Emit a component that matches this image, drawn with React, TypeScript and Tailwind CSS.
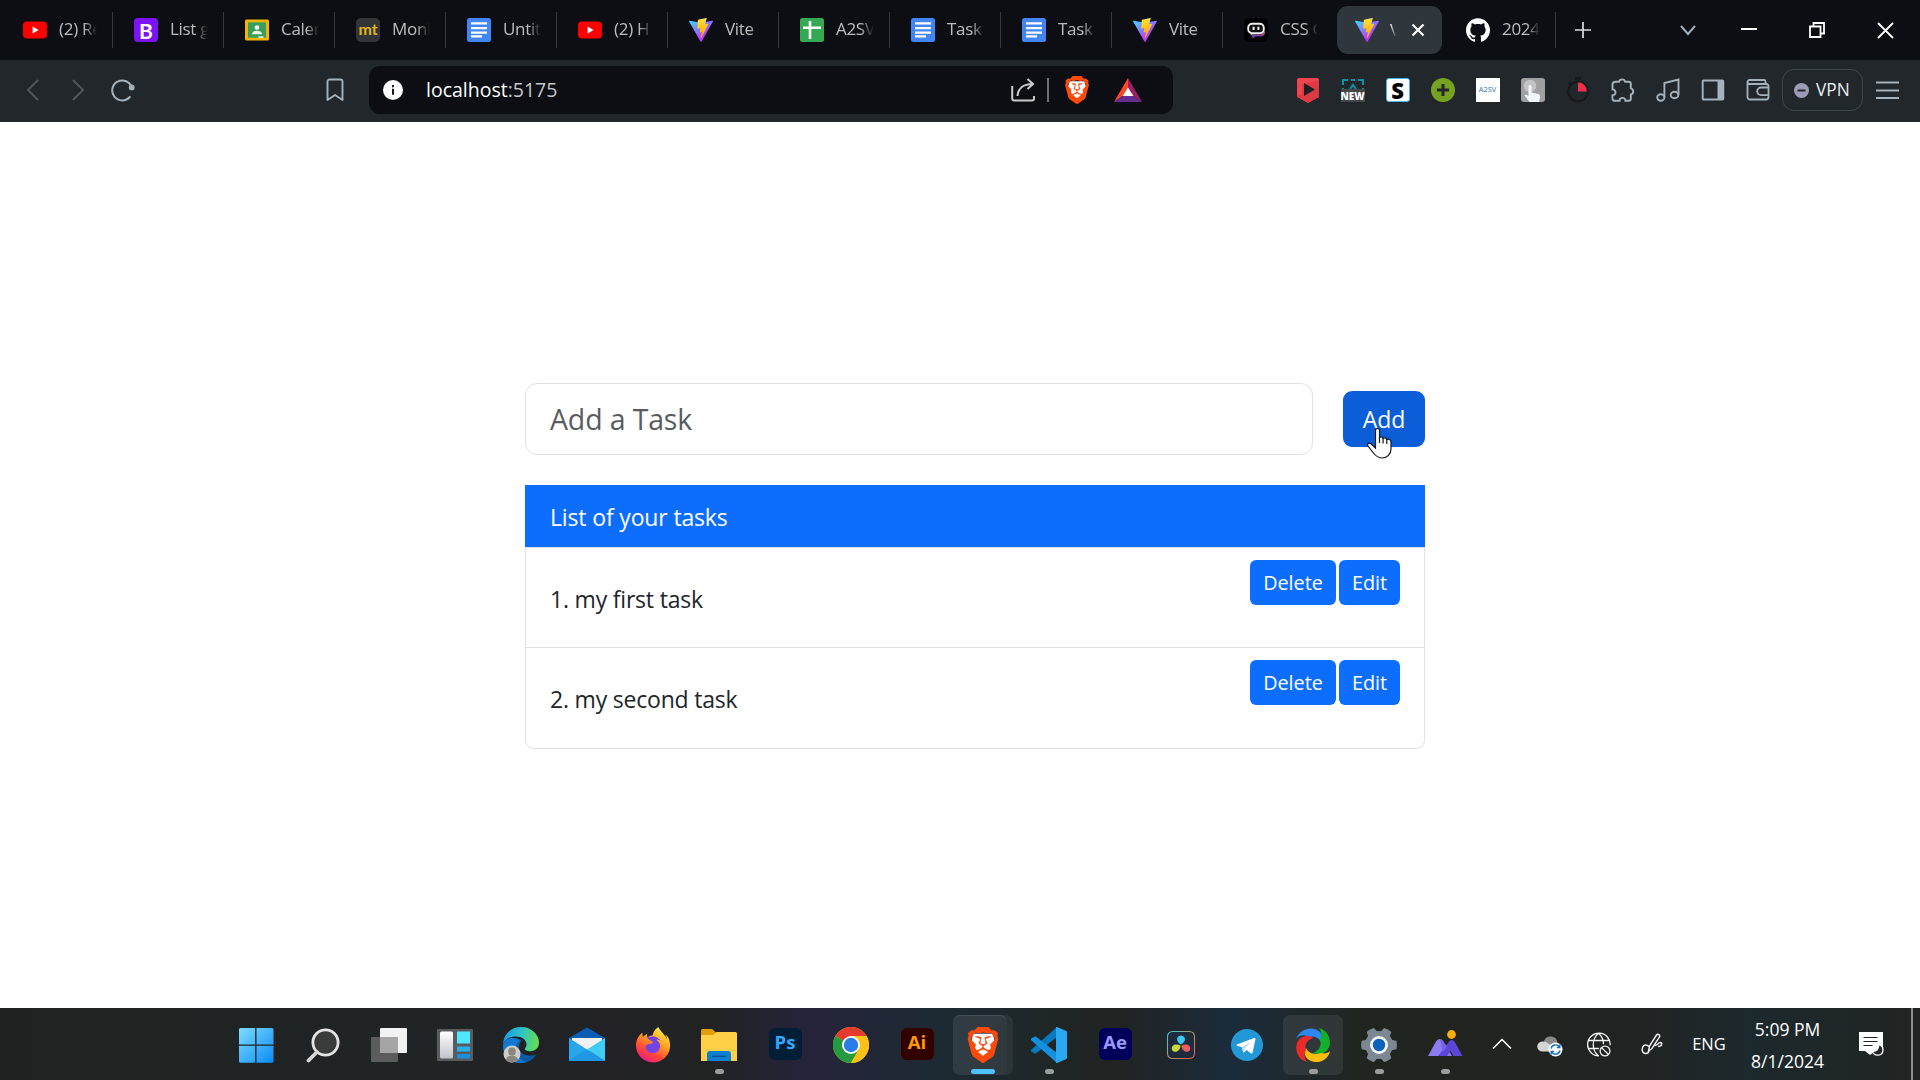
import React from "react";
import { SiBrave, SiGithub } from "react-icons/si";
import { FaFirefoxBrowser } from "react-icons/fa";

const Youtube = () => (
  <svg width="24" height="24" viewBox="0 0 24 24">
    <rect x="0" y="3.6" width="24" height="17" rx="4" fill="#f00" />
    <path d="M9.6 8.6v7l6-3.5z" fill="#fff" />
  </svg>
);

const Bootstrap = () => (
  <div className="flex h-6 w-6 items-center justify-center rounded-[4px] bg-[#7b12f7] font-['Lato'] text-[21px] leading-none font-bold text-white">
    B
  </div>
);

const Classroom = () => (
  <svg width="24" height="24" viewBox="0 0 24 24">
    <rect x="0" y="1.5" width="24" height="21" rx="1.5" fill="#f4b400" />
    <rect x="3" y="4.3" width="18" height="15.4" fill="#3a9e5a" />
    <circle cx="12" cy="9.5" r="2.3" fill="#fff" />
    <path d="M7 16.2c0-2.6 2.600-3.500 5-3.500s5 .9 5 3.500z" fill="#e8f5e9" />
    <rect x="13.500" y="18.300" width="5" height="1.600" fill="#e8f5e9" />
  </svg>
);

const Monkeytype = () => (
  <div className="flex h-6 w-6 items-center justify-center rounded-[5px] bg-[#323437] pb-[2px] font-['Lato'] text-[16px] leading-none font-bold text-[#e2b714]">
    mt
  </div>
);

const Docs = () => (
  <svg width="24" height="24" viewBox="0 0 24 24">
    <rect width="24" height="24" rx="2.500" fill="#4285f4" />
    <path d="M4 5.400h16M4 10.200h16M4 14.600h16M4 18.300h11" stroke="#fff" strokeWidth="2.200" />
  </svg>
);

const Sheets = () => (
  <svg width="24" height="24" viewBox="0 0 24 24">
    <rect width="24" height="24" rx="2.500" fill="#34a853" />
    <path d="M10 3v18M3 9.700h18" stroke="#fff" strokeWidth="2.600" />
  </svg>
);

const Vite = ({ id }: { id: string }) => (
  <svg width="24" height="24" viewBox="0 0 256 257" className="shrink-0">
    <defs>
      <linearGradient id={id + "a"} x1="0" y1="10%" x2="58%" y2="80%">
        <stop offset="0" stopColor="#41d1ff" />
        <stop offset="1" stopColor="#bd34fe" />
      </linearGradient>
      <linearGradient id={id + "b"} x1="43%" y1="2%" x2="50%" y2="89%">
        <stop offset="0" stopColor="#ffea83" />
        <stop offset=".1" stopColor="#ffdd35" />
        <stop offset="1" stopColor="#ffa800" />
      </linearGradient>
    </defs>
    <path
      fill={"url(#" + id + "a)"}
      d="M255.153 37.938L134.897 252.976c-2.483 4.440-8.862 4.466-11.382.048L.875 37.958c-2.746-4.814 1.371-10.646 6.827-9.670l120.385 21.517a6.537 6.537 0 0 0 2.322-.004l117.867-21.483c5.438-.991 9.574 4.796 6.877 9.620Z"
    />
    <path
      fill={"url(#" + id + "b)"}
      d="M185.432.063L96.440 17.501a3.268 3.268 0 0 0-2.634 3.014l-5.474 92.456a3.268 3.268 0 0 0 3.997 3.378l24.777-5.718c2.318-.535 4.413 1.507 3.936 3.838l-7.361 36.047c-.495 2.426 1.782 4.500 4.151 3.780l15.304-4.649c2.372-.720 4.652 1.360 4.150 3.788l-11.698 56.621c-.732 3.542 3.979 5.473 5.943 2.437l1.313-2.028l72.516-144.720c1.215-2.423-.880-5.186-3.540-4.672l-25.505 4.922c-2.396.462-4.435-1.770-3.759-4.114l16.646-57.705c.677-2.350-1.370-4.583-3.769-4.113Z"
    />
  </svg>
);

const ChatBot = () => (
  <svg width="24" height="24" viewBox="0 0 24 24">
    <rect width="24" height="24" rx="5.500" fill="#000" />
    <path d="M8 16.500h9l3.500-3.500v3l-3 2.500h-6l-3 2.200z" fill="#7a3fa8" />
    <path d="M17.500 17l3.500-4v2.500l-2.500 3z" fill="#c2477f" />
    <rect x="4.200" y="5.800" width="15.600" height="9.400" rx="4" fill="#111" stroke="#eee" strokeWidth="1.900" />
    <path d="M6.800 15v2.400l3-2.300" fill="#eee" />
    <path d="M9.600 8.700v3.400M14.400 8.700v3.400" stroke="#eee" strokeWidth="2.100" />
  </svg>
);

const tabs = [
  { icon: <Youtube />, label: "(2) Re" },
  { icon: <Bootstrap />, label: "List gr" },
  { icon: <Classroom />, label: "Calen" },
  { icon: <Monkeytype />, label: "Monk" },
  { icon: <Docs />, label: "Untitl" },
  { icon: <Youtube />, label: "(2) H" },
  { icon: <Vite id="v1" />, label: "Vite" },
  { icon: <Sheets />, label: "A2SV" },
  { icon: <Docs />, label: "Task" },
  { icon: <Docs />, label: "Task" },
  { icon: <Vite id="v2" />, label: "Vite" },
  { icon: <ChatBot />, label: "CSS G" },
  { icon: <Vite id="v3" />, label: "V", active: true },
  { icon: <SiGithub size={24} color="#fff" />, label: "2024-" },
];

const TabBar = () => (
  <div className="flex h-[60px] w-full items-start bg-[#0d0e13] pl-[3px]">
    {tabs.map((t, i) =>
      t.active ? (
        <div key={i} className="flex h-[60px] w-[111px] shrink-0 items-center">
          <div className="ml-[2px] flex h-[48px] w-[105px] items-center rounded-[11px] bg-[#2f373c] pl-[18px]">
            {t.icon}
            <span className="ml-[11px] w-[6px] overflow-hidden text-[17px] text-[#dfe1e5] [mask-image:linear-gradient(to_right,black_20%,transparent)]">
              {t.label}
            </span>
            <svg className="ml-[15px]" width="14" height="14" viewBox="0 0 14 14">
              <path d="M1.500 1.500l11 11M12.500 1.500l-11 11" stroke="#fff" strokeWidth="2.200" />
            </svg>
          </div>
        </div>
      ) : (
        <div key={i} className="flex h-[60px] w-[111px] shrink-0 items-center pl-5">
          {t.icon}
          <span className="ml-3 w-[38px] overflow-hidden pb-[2px] text-[17px] leading-6 tracking-[-0.3px] whitespace-nowrap text-[#bcbdbf] [mask-image:linear-gradient(to_right,black_65%,transparent)]">
            {t.label}
          </span>
          {i !== 11 && <span className="ml-[15px] h-[36px] w-px bg-[#37383c]" />}
        </div>
      )
    )}
    <div className="flex h-[60px] grow items-center">
      <svg className="ml-[17px]" width="18" height="18" viewBox="0 0 18 18">
        <path d="M9 1v16M1 9h16" stroke="#dadde0" strokeWidth="1.700" />
      </svg>
      <svg className="ml-[88px]" width="16" height="12" viewBox="0 0 16 12">
        <path d="M1 2l7 8 7-8" fill="none" stroke="#a0b0ba" strokeWidth="2" />
      </svg>
      <svg className="ml-[45px]" width="16" height="16" viewBox="0 0 16 16">
        <path d="M0 7h16" stroke="#fff" strokeWidth="2" />
      </svg>
      <svg className="ml-[52px]" width="16" height="16" viewBox="0 0 16 16">
        <path d="M1 4.500h10.500V15H1zM4.500 4V1H15v10.500h-3" fill="none" stroke="#fff" strokeWidth="1.800" />
      </svg>
      <svg className="ml-[52px]" width="17" height="17" viewBox="0 0 17 17">
        <path d="M1 1l15 15M16 1L1 16" stroke="#fff" strokeWidth="1.800" />
      </svg>
    </div>
  </div>
);

const BraveLion = ({ size }: { size: number }) => (
  <svg width={size} height={size} viewBox="0 0 24 24">
    <path d="M5.500 4.500h13l1.500 6-3 8-5 3.500-5-3.500-3-8z" fill="#fff" />
    <SiBrave size={24} color="#fb4a0b" />
  </svg>
);

const Slot = ({ children }: { children: React.ReactNode }) => (
  <div className="flex w-[45px] shrink-0 items-center justify-center">{children}</div>
);

const Toolbar = () => (
  <div className="flex h-[62px] w-full items-center bg-[#22272b] pb-[2px] pl-[10px]">
    <Slot>
      <svg width="14" height="24" viewBox="0 0 14 24">
        <path d="M12 2L2 12l10 10" fill="none" stroke="#4d575d" strokeWidth="2" />
      </svg>
    </Slot>
    <Slot>
      <svg width="14" height="24" viewBox="0 0 14 24">
        <path d="M2 2l10 10L2 22" fill="none" stroke="#4d575d" strokeWidth="2" />
      </svg>
    </Slot>
    <Slot>
      <svg width="24" height="24" viewBox="0 0 24 24">
        <path d="M20.800 9.500A10 10 0 1 0 18.800 19" fill="none" stroke="#a3b2bc" strokeWidth="2" strokeLinecap="round" />
        <circle cx="20.700" cy="9.400" r="2.900" fill="#a3b2bc" />
      </svg>
    </Slot>
    <div className="w-[167px]" />
    <Slot>
      <svg width="18" height="24" viewBox="0 0 18 24">
        <path d="M3.500 1.500h11a2 2 0 0 1 2 2v18.500L9 17l-7.500 5V3.500a2 2 0 0 1 2-2z" fill="none" stroke="#a3b2bc" strokeWidth="1.900" strokeLinejoin="round" />
      </svg>
    </Slot>
    <div className="ml-3 flex h-[48px] w-[804px] shrink-0 items-center rounded-[11px] bg-[#0d0e13] pl-[14px]">
      <svg width="20" height="20" viewBox="0 0 20 20">
        <circle cx="10" cy="10" r="10" fill="#fff" />
        <path d="M10 5v2.200M10 8.800v6" stroke="#17181c" strokeWidth="2" />
      </svg>
      <span className="ml-[23px] w-[585px] text-[19.500px] text-white">
        localhost<span className="text-[#c3c5c8]">:5175</span>
      </span>
      <svg width="24" height="24" viewBox="0 0 24 24">
        <path d="M1.200 8v12.500a2 2 0 0 0 2 2H21a2 2 0 0 0 2-2V18M6.500 18C7 11 12 6 21.500 6M16.500 1l5.500 5-5.500 5" fill="none" stroke="#c8cacc" strokeWidth="2" />
      </svg>
      <span className="ml-[12px] h-6 w-[2px] bg-[#6c6e72]" />
      <span className="ml-[14px]">
        <BraveLion size={28} />
      </span>
      <svg className="ml-[23px]" width="28" height="24" viewBox="0 0 28 24">
        <path d="M14 0v9.500L8.500 18 0 24z" fill="#ff4724" />
        <path d="M14 0l14 24-8.500-6L14 9.500z" fill="#9e1f63" />
        <path d="M0 24l8.500-6h11l8.500 6z" fill="#662d91" />
        <path d="M14 9.500l5.500 8.500h-11z" fill="#fff" />
      </svg>
    </div>
    <div className="w-[112px] shrink-0" />
    <Slot>
      <svg width="24" height="26" viewBox="0 0 24 26">
        <path d="M3 1h18a2 2 0 0 1 2 2v17l-11 6L1 20V3a2 2 0 0 1 2-2z" fill="#ee4450" />
        <path d="M1 19l5-2V7l17-4v17l-11 6z" fill="#d9363f" opacity=".7" />
        <path d="M8 6v13l11-6.500z" fill="#1d2023" />
      </svg>
    </Slot>
    <Slot>
      <div className="flex h-6 w-6 flex-col items-center">
        <svg className="shrink-0" width="22" height="11" viewBox="0 0 22 11">
          <path d="M1 7V2h5M16 2h5v5M9 2h4M8 11l3-4 3 4M1 10v1M21 10v1" fill="none" stroke="#0993a8" strokeWidth="2" />
        </svg>
        <div className="flex h-[13px] w-6 items-center justify-center bg-[#444749] text-[10px] leading-none font-extrabold text-white">
          NEW
        </div>
      </div>
    </Slot>
    <Slot>
      <div className="flex h-6 w-6 items-center justify-center rounded-[3px] border border-[#41b8ea] bg-white text-[22px] leading-none font-extrabold text-black">
        S
      </div>
    </Slot>
    <Slot>
      <svg width="24" height="24" viewBox="0 0 24 24">
        <circle cx="12" cy="12" r="12" fill="#77a120" />
        <path d="M12 6v12M6 12h12" stroke="#22272b" strokeWidth="3" />
      </svg>
    </Slot>
    <Slot>
      <div className="flex h-6 w-6 items-center justify-center bg-white text-[7.500px] leading-none text-[#3178b4]">A2SV</div>
    </Slot>
    <Slot>
      <svg width="24" height="24" viewBox="0 0 24 24">
        <rect width="24" height="24" rx="3" fill="#a0a0a0" />
        <circle cx="9" cy="8" r="6.200" fill="#c4c4c4" />
        <path d="M7.500 8.500c0-2 3-2 3 0v6l6 1.200c2 .4 2.800 1.500 2.500 3.300L18.200 24H8.500L3.500 17.500c1.200-1.300 2.800-.5 4 .8z" fill="#f1f6fd" />
      </svg>
    </Slot>
    <Slot>
      <svg width="24" height="26" viewBox="0 0 24 26">
        <circle cx="12" cy="14.500" r="9.800" fill="none" stroke="#17191b" strokeWidth="2" />
        <path d="M9 1.500h6M12 2v3M3 5.500l2 2" stroke="#17191b" strokeWidth="2.500" />
        <path d="M12 14.500V5.300a9 9 0 0 1 8.800 9.200z" fill="#f2304a" />
      </svg>
    </Slot>
    <Slot>
      <svg width="24" height="24" viewBox="0 0 24 24">
        <path
          d="M4.500 3.800H8a3.200 3.200 0 0 1 6.200 0h3.600a2 2 0 0 1 2 2v4.500a3.200 3.200 0 0 1 0 6.200v4.300a2 2 0 0 1-2 2h-3.400c.3-3.800-6-4-5.800 0H3.500a2 2 0 0 1-2-2v-3.600c4 .3 4-6 0-5.800V6.800a3 3 0 0 1 3-3z"
          fill="none"
          stroke="#a3b2bc"
          strokeWidth="1.900"
        />
      </svg>
    </Slot>
    <Slot>
      <svg width="24" height="24" viewBox="0 0 24 24" fill="none" stroke="#a3b2bc" strokeWidth="1.900">
        <ellipse cx="4.800" cy="19.500" rx="3.600" ry="3.200" />
        <ellipse cx="18.500" cy="17" rx="3.800" ry="3.200" />
        <path d="M8.400 19.500V5L22.500 1.500V17" />
      </svg>
    </Slot>
    <Slot>
      <svg width="24" height="24" viewBox="0 0 24 24">
        <rect x="1.700" y="2.500" width="20.600" height="19" rx="1" fill="none" stroke="#a3b2bc" strokeWidth="1.900" />
        <path d="M16.500 2.500h6v19h-6z" fill="#a3b2bc" />
      </svg>
    </Slot>
    <Slot>
      <svg width="24" height="24" viewBox="0 0 24 24" fill="none" stroke="#a3b2bc" strokeWidth="1.800">
        <path d="M1.500 4v15a2.500 2.500 0 0 0 2.500 2.500h16a2.500 2.500 0 0 0 2.500-2.500V8a2 2 0 0 0-2-2H3.500a2 2 0 0 1 0-4H18a1.500 1.500 0 0 1 1.500 1.500V6" />
        <path d="M22.500 9.500H15a3.800 3.800 0 0 0 0 7.600h7.500" />
      </svg>
    </Slot>
    <div className="ml-[2px] flex h-[42px] w-[81px] shrink-0 items-center rounded-[12px] border border-[#3d494d] pl-[11px]">
      <svg width="15" height="15" viewBox="0 0 15 15">
        <circle cx="7.500" cy="7.500" r="7.500" fill="#9c9cb4" />
        <path d="M3.500 7.500h8" stroke="#22272b" strokeWidth="2" />
      </svg>
      <span className="ml-[7px] pb-px text-[17.300px] leading-none text-[#eceef0]">VPN</span>
    </div>
    <svg className="ml-[13px] shrink-0" width="23" height="18" viewBox="0 0 23 18">
      <path d="M0 1.500h23M0 9.500h23M0 17h23" stroke="#a3b2bc" strokeWidth="1.900" />
    </svg>
  </div>
);

const HandCursor = () => (
  <svg className="absolute top-[36px] left-[23px]" width="27" height="33" viewBox="0 0 27 33">
    <path
      d="M9.500 21V3.500c0-2.700 4-2.700 4 0V10.500c1-1.200 3.300-.8 3.600.8 1.300-1 3.500-.4 3.700 1.200 1.500-.8 4.200-.2 4.200 2.500v7c0 5-4 9-8.500 9-4 0-7-2.200-9.500-5.500L1.800 18.800c-1-2.500 1.500-3.500 3.700-1.600z"
      fill="#fff"
      stroke="#151520"
      strokeWidth="1.200"
    />
    <path d="M13.500 10v6M17.100 11v5.500M20.800 12.500v4.500" stroke="#151520" strokeWidth="1.200" />
  </svg>
);

const TaskRow = ({ n, text, last }: { n: number; text: string; last?: boolean }) => (
  <li
    className={
      last
        ? "flex h-[102px] items-start justify-between rounded-b-[9px] border border-[#dee2e6] pt-[12px] pr-[24px] pl-[24px]"
        : "flex h-[100px] items-start justify-between border-x border-t border-[#dee2e6] pt-[12px] pr-[24px] pl-[24px]"
    }
  >
    <span className="mt-[21px] text-[23px] leading-[36px] tracking-[-0.2px] text-[#212529]">
      {n}. {text}
    </span>
    <div className="flex gap-[3px]">
      <button className="h-[45px] w-[86px] rounded-[6px] bg-[#0d6efd] pt-px text-[19.800px] text-white">Delete</button>
      <button className="h-[45px] w-[61px] rounded-[6px] bg-[#0d6efd] pt-px text-[19.800px] text-white">Edit</button>
    </div>
  </li>
);

const Page = () => (
  <main className="flex h-[886px] w-full flex-col items-center bg-white pt-[261px] pl-[30px]">
    <div className="w-[900px]">
      <div className="flex h-[72px] items-center justify-between">
        <div className="flex h-[72px] w-[788px] items-center rounded-[12px] border border-[#dee2e6] pl-[24px] text-[28.500px] leading-none tracking-[-0.150px] text-[#595c5f]">
          Add a Task
        </div>
        <div className="relative h-[56px] w-[82px]">
          <button className="h-[56px] w-[82px] rounded-[9px] bg-[#0b5ed7] pt-px text-[23px] text-white">Add</button>
          <HandCursor />
        </div>
      </div>
      <ul className="mt-[30px]">
        <li className="flex h-[62px] items-center bg-[#0d6efd] pt-[3px] pl-[25px] text-[23px] tracking-[-0.150px] text-white">
          List of your tasks
        </li>
        <TaskRow n={1} text="my first task" />
        <TaskRow n={2} text="my second task" last />
      </ul>
    </div>
  </main>
);

const Windows = () => (
  <svg width="36" height="36" viewBox="0 0 36 36">
    <defs>
      <linearGradient id="win" x1="0" y1="0" x2="1" y2="1">
        <stop offset="0" stopColor="#7fdcff" />
        <stop offset="1" stopColor="#0a8bf7" />
      </linearGradient>
    </defs>
    <path d="M1.500 1H16.200v16.500H0V2.500A1.500 1.500 0 0 1 1.500 1zM17.500 1h15.500a1.500 1.500 0 0 1 1.500 1.500v15H17.500zM0 18.800h16.200V35.800H1.500a1.500 1.500 0 0 1-1.500-1.500zM17.500 18.800h17v15.500a1.500 1.500 0 0 1-1.500 1.500H17.500z" fill="url(#win)" />
  </svg>
);

const SearchIcon = () => (
  <svg width="36" height="36" viewBox="0 0 36 36">
    <circle cx="20.500" cy="15.500" r="12.600" fill="#3a3b3b" stroke="#e4e4e4" strokeWidth="2.800" />
    <path d="M12 25l-8.500 8.500" stroke="#d6d6d6" strokeWidth="3.800" strokeLinecap="round" />
  </svg>
);

const TaskView = () => (
  <svg width="36" height="36" viewBox="0 0 36 36">
    <rect x="9" y="1" width="27" height="25" rx="1" fill="#f2f2f2" />
    <rect x="0" y="10" width="27" height="25" rx="1" fill="#5c5c5c" />
    <path d="M9 10h18v16H9z" fill="#a5a5a5" />
  </svg>
);

const Widgets = () => (
  <svg width="36" height="36" viewBox="0 0 36 36">
    <defs>
      <linearGradient id="wid" x1="0" y1="0" x2="0" y2="1">
        <stop offset="0" stopColor="#fff" />
        <stop offset="1" stopColor="#bfc3c9" />
      </linearGradient>
    </defs>
    <rect x="0" y="2" width="36" height="32" rx="1" fill="#595b5d" />
    <rect x="3" y="4.500" width="13" height="27" rx="1.500" fill="url(#wid)" />
    <rect x="20" y="4.500" width="13" height="12" fill="#50e6ff" />
    <rect x="20" y="19.500" width="13" height="5" fill="#28afea" />
    <rect x="20" y="27" width="13" height="4.500" fill="#1a90dc" />
  </svg>
);

const Edge = () => (
  <svg width="36" height="36" viewBox="0 0 36 36">
    <defs>
      <linearGradient id="edgeTop" x1="0" y1=".4" x2="1" y2=".5">
        <stop offset="0" stopColor="#1c9ce0" />
        <stop offset=".5" stopColor="#2cc3c9" />
        <stop offset="1" stopColor="#67e04b" />
      </linearGradient>
    </defs>
    <path d="M0 18C0 30 8 36 18 36c7 0 12-3 15-8.500-6 2.500-17 1-17-8 0-2.500 1-4.500 2.500-6C12 9 2 10 0 18z" fill="#0c59a4" />
    <path d="M0 18c2-8 12-9 17-4-4 2-5.500 9-2.500 14 2 3.500 5 6 8.500 7.300C10 38 0 31 0 18z" fill="#1279d1" />
    <path d="M0 17C1 6 9 0 18 0c11 0 18 8 18 15.500 0 6-4.500 8.700-9 8.700-3.500 0-5.500-1-5-2.700.5-1.300 1.500-2 1.500-4C23.500 13 19 9.500 13 9.500 7 9.500 2 12 0 17z" fill="url(#edgeTop)" />
    <circle cx="9" cy="27" r="8.500" fill="#cfccc8" />
    <circle cx="9" cy="24.500" r="3.900" fill="#8a8783" />
    <path d="M3 33c.5-6 11.500-6 12 0-3 3.300-9 3.300-12 0z" fill="#8a8783" />
  </svg>
);

const Mail = () => (
  <svg width="36" height="36" viewBox="0 0 36 36">
    <path d="M0 11L18 .5 36 11v4H0z" fill="#0a5db3" />
    <path d="M3 11h30v8L18 25 3 19z" fill="#f1f1f1" />
    <path d="M0 11l18 11.500L36 34H1.500A1.500 1.500 0 0 1 0 32.500z" fill="#27a7ea" />
    <path d="M36 11v23L18 22.500z" fill="#3fcdf5" />
    <path d="M0 33L18 22.500 36 34H1z" fill="#1f97e3" />
  </svg>
);

const Firefox = () => (
  <svg width="36" height="36" viewBox="0 0 36 36">
    <defs>
      <linearGradient id="ffx" x1=".8" y1="0" x2=".25" y2="1">
        <stop offset="0" stopColor="#fff44f" />
        <stop offset=".4" stopColor="#ffa21f" />
        <stop offset=".7" stopColor="#ff4a37" />
        <stop offset="1" stopColor="#e7158d" />
      </linearGradient>
    </defs>
    <circle cx="18" cy="18" r="10" fill="#7542e5" />
    <FaFirefoxBrowser size={36} fill="url(#ffx)" />
  </svg>
);

const Folder = () => (
  <svg width="36" height="36" viewBox="0 0 36 36">
    <path d="M0 3.500A1.500 1.500 0 0 1 1.500 2H11l4.500 4v4H0z" fill="#e09f0a" />
    <path d="M0 8h12l3.500-3H34.500A1.500 1.500 0 0 1 36 6.500V34H0z" fill="#ffcf48" />
    <path d="M6 34v-7a3 3 0 0 1 3-3h18a3 3 0 0 1 3 3v7z" fill="#0f80d0" />
    <path d="M11 29.300h14" stroke="#0a4d8a" strokeWidth="1.300" />
  </svg>
);

const Chrome = () => (
  <svg width="36" height="36" viewBox="0 0 36 36">
    <circle cx="18" cy="18" r="18" fill="#fbc116" />
    <path d="M18 18L2.400 9A18 18 0 0 1 33.600 9z" fill="#e33b2e" />
    <path d="M2.400 9A18 18 0 0 0 18 36l7.800-13.500L18 18z" fill="#249a41" />
    <path d="M18 9h15.600A18 18 0 0 1 18 36l7.800-13.500z" fill="#fbc116" />
    <circle cx="18" cy="18" r="9" fill="#fff" />
    <circle cx="18" cy="18" r="7.200" fill="#2a7bea" />
  </svg>
);

const VSCode = () => (
  <svg width="36" height="36" viewBox="0 0 36 36">
    <path d="M26 0v10L4.500 26.800 0.500 24.800c-.7-.6-.7-1.600 0-2.200z" fill="#0879bf" />
    <path d="M26 36V26L4.500 9.200.5 11.200c-.7.600-.7 1.600 0 2.200z" fill="#1590dc" />
    <path d="M26 0l8.800 3.800c.7.300 1.200 1 1.200 1.800v24.800c0 .8-.5 1.500-1.200 1.800L26 36c-.8.200-1-.2-1-1V1c0-.8.200-1.200 1-1z" fill="#29a9f2" />
  </svg>
);

const Adobe = ({ text, cls }: { text: string; cls: string }) => (
  <div className={"mb-[3px] flex h-[32px] w-[33px] items-center justify-center rounded-[6px] pb-[2px] text-[18.500px] leading-none font-bold " + cls}>
    {text}
  </div>
);

const DaVinci = () => (
  <svg width="30" height="30" viewBox="0 0 30 30">
    <defs>
      <linearGradient id="dvb" x1="0" y1="0" x2="1" y2="1">
        <stop offset="0" stopColor="#3ec6d8" />
        <stop offset=".5" stopColor="#b8925a" />
        <stop offset="1" stopColor="#e05a5a" />
      </linearGradient>
    </defs>
    <rect x="1.500" y="1.500" width="27" height="27" rx="5" fill="#1e2b3d" stroke="url(#dvb)" strokeWidth="1.100" />
    <path d="M15 14.500c-5-2.500-5.500-8.500 0-9 5.500.5 5 6.500 0 9z" fill="#3cc8ee" />
    <path d="M14.500 15.500c0 5.500-5.500 8.500-8.500 4.500-1.500-5 4-7 8.500-4.500z" fill="#c7d936" />
    <path d="M15.500 15.500c0 5.500 5.500 8.500 8.500 4.500 1.500-5-4-7-8.500-4.500z" fill="#ee5b61" />
  </svg>
);

const Telegram = () => (
  <svg width="32" height="32" viewBox="0 0 32 32">
    <circle cx="16" cy="16" r="16" fill="#2299d6" />
    <path d="M6 15.500L23 9c1-.4 1.700.2 1.400 1.500l-2.800 13c-.2 1-.9 1.200-1.800.7l-4.300-3.200-2.200 2.200c-.5.500-1.200.4-1.300-.4l-1.200-4.500-4.600-1.500c-.9-.4-.9-.9-.2-1.300z" fill="#fff" />
    <path d="M11 18.500l9.500-6.500-7 7.500-.3 3.500z" fill="#b5d7ea" />
  </svg>
);

const Swirl = () => (
  <svg width="34" height="34" viewBox="0 0 34 34">
    <path d="M0 11C4 1 16-3 24 4c4 4 4 8 2 12-2-6-8-9-13-7-5-3-10-2-13 2z" fill="#2f86ec" />
    <path d="M23 0c11 3 13 15 9 21-3 5-9 6-15 4 6-2 9-7 7-13 2-4 2-8-1-12z" fill="#12b02b" />
    <path d="M34 23c-2 10-13 14-21 9-5-3-5-8-3-12 3 6 9 7 15 5 4 1 7 0 9-2z" fill="#fcbf09" />
    <path d="M11 34C1 32-2 20 2 13c4-6 10-6 16-3-6 1-10 6-8 12-2 4-2 8 1 12z" fill="#ec2a2a" />
  </svg>
);

const Gear = () => (
  <svg width="36" height="36" viewBox="0 0 36 36">
    <g fill="#7c8792">
      <circle cx="18" cy="18" r="14" />
      {[30, 90, 150, 210, 270, 330].map((a) => (
        <path key={a} d="M12.500 7l1.300-6.300c2.700-.8 5.700-.8 8.400 0L23.500 7z" transform={"rotate(" + a + " 18 18)"} />
      ))}
    </g>
    <circle cx="18" cy="18" r="9" fill="#f3f3f3" />
    <circle cx="18" cy="18" r="6.200" fill="#0c63b8" />
  </svg>
);

const Peaks = () => (
  <svg width="36" height="36" viewBox="0 0 36 36">
    <path d="M1 29L9 14.500c2-3.500 5.500-3.500 7.500 0L25 29z" fill="#8a7cf0" />
    <path d="M11 29l9-11.500 1.500-2.300c2-2.800 4.500-2.800 6.500 0L35.500 29h-9l-3-5-3.500 5z" fill="#5b46d9" />
    <path d="M13 12l7 7-4 6z" fill="#7561e8" />
    <circle cx="24.500" cy="7.500" r="4.400" fill="#fcac08" />
  </svg>
);

type TaskbarApp = { icon: React.ReactNode; state?: "open" | "active" | "lit" };
const apps: TaskbarApp[] = [
  { icon: <Windows /> },
  { icon: <SearchIcon /> },
  { icon: <TaskView /> },
  { icon: <Widgets /> },
  { icon: <Edge /> },
  { icon: <Mail /> },
  { icon: <Firefox /> },
  { icon: <Folder />, state: "open" },
  { icon: <Adobe text="Ps" cls="bg-[#001e36] text-[#31a8ff]" /> },
  { icon: <Chrome /> },
  { icon: <Adobe text="Ai" cls="bg-[#330000] text-[#ff9a00]" /> },
  { icon: <BraveLion size={36} />, state: "active" },
  { icon: <VSCode />, state: "open" },
  { icon: <Adobe text="Ae" cls="bg-[#00005b] text-[#9999ff]" /> },
  { icon: <DaVinci /> },
  { icon: <Telegram /> },
  { icon: <Swirl />, state: "lit" },
  { icon: <Gear />, state: "open" },
  { icon: <Peaks />, state: "open" },
];

const AppSlot = ({ app }: { app: TaskbarApp }) => (
  <div className="relative flex h-[72px] w-[66px] shrink-0 items-center justify-center pt-[2px]">
    {app.state === "active" && (
      <>
        <span className="absolute top-[7px] left-[3px] h-[60px] w-[60px] rounded-[7px] bg-white/6" />
        <span className="absolute top-[7px] left-[3px] h-[60px] w-[54px] rounded-[7px] border-t border-white/10 bg-white/3" />
      </>
    )}
    {app.state === "lit" && <span className="absolute top-[7px] left-[3px] h-[60px] w-[60px] rounded-[7px] bg-white/8" />}
    <span className="relative flex h-9 w-9 items-center justify-center">{app.icon}</span>
    {app.state === "active" && <span className="absolute top-[61px] left-[21px] h-[5px] w-6 rounded-full bg-[#4cc2ff]" />}
    {(app.state === "open" || app.state === "lit") && (
      <span className="absolute top-[61px] left-[29px] h-[5px] w-[9px] rounded-full bg-[#9b9c9c]" />
    )}
  </div>
);

const Taskbar = () => (
  <footer className="flex h-[72px] w-full items-center bg-[linear-gradient(90deg,#1f2220_0%,#202425_22%,#222226_32%,#212322_37%,#25233a_42%,#1c2a33_49%,#1f2626_55%,#212322_58%,#1b2b3a_64%,#20251f_71%,#212322_85%,#1c292d_91%,#212422_100%)] pl-[224px]">
    {apps.map((a, i) => (
      <AppSlot key={i} app={a} />
    ))}
    <div className="flex w-[48px] justify-center">
      <svg width="20" height="12" viewBox="0 0 20 12">
        <path d="M1 10.500l9-9 9 9" fill="none" stroke="#fff" strokeWidth="1.500" />
      </svg>
    </div>
    <div className="flex w-[48px] justify-center pt-[3px]">
      <svg width="26" height="22" viewBox="0 0 26 22">
        <path d="M7 6a7 7 0 0 1 13.500 2l-8 6z" fill="#8a8a8a" />
        <path d="M5.500 16.500a5 5 0 0 1-.5-10c4-.5 5 1 8 3l7 3-4 4z" fill="#d4d4d4" />
        <circle cx="18.500" cy="14.500" r="7" fill="#fff" />
        <path d="M14 13.500a4.700 4.700 0 0 1 8.500-1.500M23 15.500a4.700 4.700 0 0 1-8.500 1.700M22.800 9.500v3h-3M14.200 19.500v-3h3" fill="none" stroke="#1272c8" strokeWidth="1.400" />
      </svg>
    </div>
    <div className="flex w-[48px] justify-center">
      <svg width="25" height="25" viewBox="0 0 25 25" fill="none" stroke="#f2f2f2" strokeWidth="1.300">
        <path d="M13 23.800a11.300 11.300 0 1 1 11.200-10.500M12.500 1.200c-7 6-7 17 0 22.600M12.500 1.200c3.500 3 5 7 5 11M2 8.500h21M2 16.500h11" />
        <circle cx="19" cy="19" r="4.900" />
        <path d="M15.500 15.500l7 7" />
      </svg>
    </div>
    <div className="flex w-[60px] justify-center">
      <svg width="22" height="22" viewBox="0 0 22 22" fill="none" stroke="#f2f2f2" strokeWidth="1.400">
        <path d="M7.500 18l1-5L15.500 2c1.500-1.800 4 0 3 2L11 15.500zM8 13.500C4 10 1 13 1.200 17c.3 4.500 6 4.500 6.800 1M14 12.500c2 .5 3.500-3.500 5.500-3 2.500 1 1 4-2.500 4" />
      </svg>
    </div>
    <div className="w-[54px] pt-px text-center text-[16.500px] leading-none text-white">ENG</div>
    <div className="w-[103px] pt-[2px] text-center text-[17.500px] leading-[32px] text-white">
      <div>5:09 PM</div>
      <div>8/1/2024</div>
    </div>
    <div className="flex w-[63px] justify-center">
      <svg width="26" height="26" viewBox="0 0 26 26">
        <path d="M1 1h24v19h-8l-5 4-5-4H1z" fill="#fff" />
        <path d="M5.500 6.500h14M5.500 10.500h14M5.500 14.500h9" stroke="#222" strokeWidth="1.200" />
        <path d="M20.500 13.500c.5 4-2 6.500-6 7 2 5.500 10 4.500 10.500-1 .2-3-1.500-5.500-4.500-6z" fill="#222829" stroke="#fff" strokeWidth="1.300" />
      </svg>
    </div>
    <span className="ml-[9px] h-[72px] w-[2px] bg-[#8a8c8d]" />
  </footer>
);

export default function App() {
  return (
    <div className="flex h-[1080px] w-[1920px] flex-col overflow-hidden bg-white font-['Open_Sans',sans-serif]">
      <TabBar />
      <Toolbar />
      <Page />
      <Taskbar />
    </div>
  );
}
